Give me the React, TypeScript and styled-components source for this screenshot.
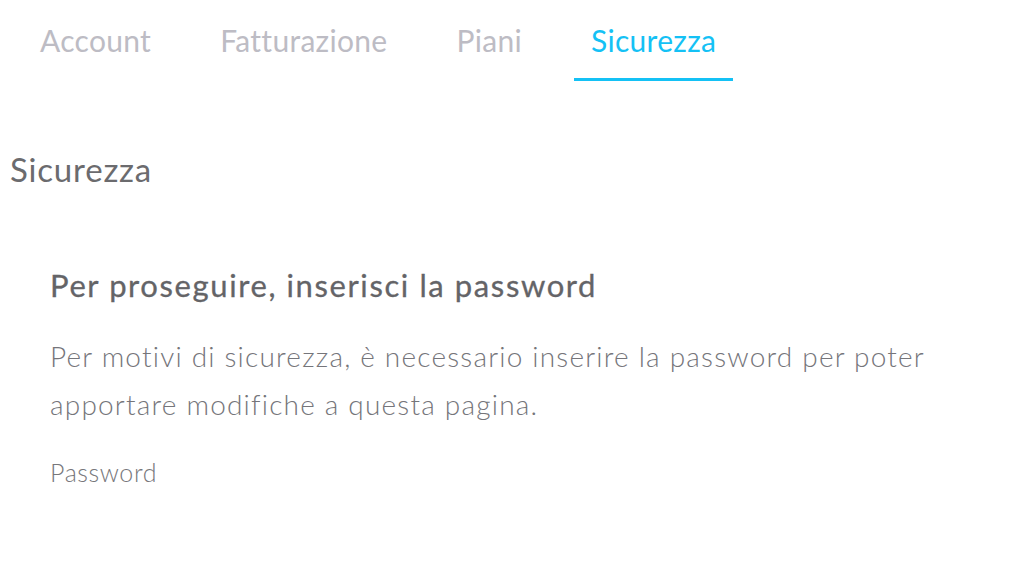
import React from "react";
import styled, { createGlobalStyle } from "styled-components";

const GlobalStyle = createGlobalStyle`
  body {
    margin: 0;
    background: #ffffff;
    font-family: Lato, "Open Sans", sans-serif;
  }
`;

const Page = styled.div`
  width: 1024px;
  height: 588px;
  overflow: hidden;
`;

const TabBar = styled.nav`
  display: flex;
  gap: 35px;
  padding-left: 23px;
`;

const Tab = styled.button<{ active?: boolean }>`
  display: flex;
  align-items: flex-start;
  border: none;
  background: transparent;
  padding: 22px 17px 0;
  height: 81px;
  box-sizing: border-box;
  font-family: inherit;
  font-size: 30px;
  font-weight: 400;
  letter-spacing: 0.3px;
  line-height: 36px;
  color: ${({ active }) => (active ? "#14c1f5" : "#bdbcc4")};
  border-bottom: 3px solid ${({ active }) => (active ? "#14c1f5" : "transparent")};
  cursor: pointer;
`;

const Title = styled.h1`
  margin: 68px 0 0 10px;
  font-size: 33px;
  font-weight: 400;
  letter-spacing: 0.8px;
  line-height: 40px;
  color: #6b6b6e;
`;

const Section = styled.section`
  padding: 0 50px;
  margin-top: 77px;
`;

const SectionTitle = styled.h2`
  margin: 0;
  font-size: 31px;
  font-weight: 400;
  letter-spacing: 1.6px;
  line-height: 38px;
  color: #646467;
  -webkit-text-stroke: 0.3px #646467;
`;

const Text = styled.p`
  margin: 28px 0 0;
  font-size: 28px;
  font-weight: 300;
  letter-spacing: 1.2px;
  line-height: 48px;
  color: #75757a;
  max-width: 900px;
`;

const Label = styled.label`
  display: block;
  margin-top: 29px;
  font-size: 25px;
  font-weight: 300;
  letter-spacing: 0.6px;
  line-height: 30px;
  color: #77777b;
`;

const tabs = ["Account", "Fatturazione", "Piani", "Sicurezza"];

export default function App() {
  return (
    <Page>
      <GlobalStyle />
      <TabBar>
        {tabs.map((t) => (
          <Tab key={t} active={t === "Sicurezza"}>
            {t}
          </Tab>
        ))}
      </TabBar>
      <Title>Sicurezza</Title>
      <Section>
        <SectionTitle>Per proseguire, inserisci la password</SectionTitle>
        <Text>
          Per motivi di sicurezza, è necessario inserire la password per poter
          apportare modifiche a questa pagina.
        </Text>
        <Label htmlFor="password">Password</Label>
      </Section>
    </Page>
  );
}
